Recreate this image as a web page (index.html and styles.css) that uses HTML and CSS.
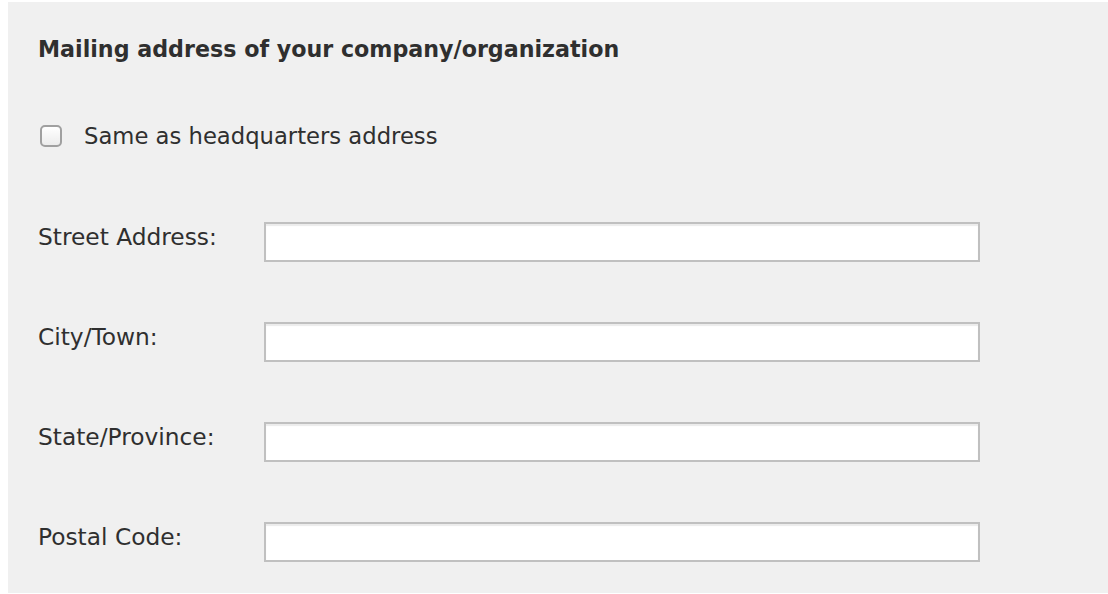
FILE: index.html
```html
<!DOCTYPE html>
<html>
<head>
<meta charset="utf-8">
<link rel="stylesheet" href="styles.css">
</head>
<body>
<div class="panel">
  <div class="title">Mailing address of your company/organization</div>
  <label class="check-row"><span class="box"></span><span class="check-label">Same as headquarters address</span></label>
  <div class="fields">
    <div class="row"><span class="label">Street Address:</span><span class="input"></span></div>
    <div class="row"><span class="label">City/Town:</span><span class="input"></span></div>
    <div class="row"><span class="label">State/Province:</span><span class="input"></span></div>
    <div class="row"><span class="label">Postal Code:</span><span class="input"></span></div>
  </div>
</div>
</body>
</html>
```
FILE: styles.css
```css
html, body {
  margin: 0;
  padding: 0;
  background: #ffffff;
}
body {
  font-family: "DejaVu Sans", "Liberation Sans", sans-serif;
  color: #2f2f2f;
}
.panel {
  margin: 2px 0 0 8px;
  height: 591px;
  background: #f0f0f0;
  padding: 32px 0 0 30px;
  box-sizing: border-box;
}
.title {
  font-weight: bold;
  font-size: 22.2px;
  line-height: 30px;
  height: 30px;
}
.check-row {
  display: flex;
  align-items: center;
  height: 30px;
  margin-top: 57px;
  padding-left: 2px;
}
.box {
  width: 18px;
  height: 18px;
  border: 2px solid #a0a0a0;
  border-radius: 5px;
  background: linear-gradient(#ffffff, #ececec);
}
.check-label {
  margin-left: 22px;
  font-size: 22.7px;
  line-height: 30px;
}
.fields {
  margin-top: 71px;
  display: flex;
  flex-direction: column;
  gap: 60px;
}
.row {
  display: flex;
  align-items: flex-start;
  height: 40px;
}
.label {
  width: 226px;
  font-size: 23.3px;
  line-height: 30px;
}
.input {
  width: 716px;
  height: 40px;
  box-sizing: border-box;
  background: #ffffff;
  border: 2px solid #c0c0c0;
  box-shadow: inset 0 2px 1px #ececec;
}
```
